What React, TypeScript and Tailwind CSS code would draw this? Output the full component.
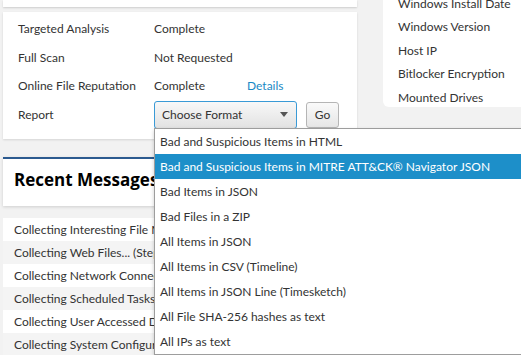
const statusRows = [
    { label: "Targeted Analysis", value: "Complete" },
    { label: "Full Scan", value: "Not Requested" },
    { label: "Online File Reputation", value: "Complete", link: "Details" },
];

const hostRows: string[] = [
    "Windows Install Date",
    "Windows Version",
    "Host IP",
    "Bitlocker Encryption",
    "Mounted Drives",
];

const messages: string[] = [
    "Collecting Interesting File Metadata...",
    "Collecting Web Files... (Step 2 of 3)",
    "Collecting Network Connections...",
    "Collecting Scheduled Tasks...",
    "Collecting User Accessed Data...",
    "Collecting System Configuration...",
];

const formats: string[] = [
    "Bad and Suspicious Items in HTML",
    "Bad and Suspicious Items in MITRE ATT&CK\u00ae Navigator JSON",
    "Bad Items in JSON",
    "Bad Files in a ZIP",
    "All Items in JSON",
    "All Items in CSV (Timeline)",
    "All Items in JSON Line (Timesketch)",
    "All File SHA-256 hashes as text",
    "All IPs as text",
];

const selectedFormat = 1;

function App() {
    return (
        <div className="relative w-[521px] h-[355px] overflow-hidden bg-[#f2f2f2] text-[12px] text-[#333] font-['Lato','Liberation_Sans',sans-serif]">
            <div className="flex flex-row gap-[26px] pl-[3px]">
                {/* left column */}
                <div className="w-[354px] shrink-0 flex flex-col">
                    <div className="h-[7px] bg-white shadow-[0_1px_2px_rgba(0,0,0,0.15)]"></div>

                    <div className="mt-[5px] h-[127px] bg-white shadow-[0_1px_2px_rgba(0,0,0,0.12)] pl-[15px] pt-[3px]">
                        {statusRows.map((row) => (
                            <div key={row.label} className="h-[28.5px] flex items-center">
                                <span className="w-[136px]">{row.label}</span>
                                <span className="w-[93px]">{row.value}</span>
                                {row.link && <span className="text-[#1a8ac5]">{row.link}</span>}
                            </div>
                        ))}
                        <div className="h-[28.5px] flex items-center">
                            <span className="w-[136px]">Report</span>
                            <div className="w-[143px] h-[28px] rounded-[3px] border border-[#3a9ad6] bg-gradient-to-b from-[#f8f8f8] to-[#e2e2e2] flex items-center justify-between pl-[7px] pr-[8px]">
                                <span>Choose Format</span>
                                <svg width="8" height="5" viewBox="0 0 8 5">
                                    <path d="M0 0 L8 0 L4 5 Z" fill="#555" />
                                </svg>
                            </div>
                            <div className="ml-[9px] w-[33px] h-[26px] rounded-[3px] border border-[#b5b5b5] bg-gradient-to-b from-[#fafafa] to-[#e6e6e6] flex items-center justify-center">
                                Go
                            </div>
                        </div>
                    </div>

                    <div className="mt-[18px] h-[49px] bg-white border-t-[2px] border-[#2c5a8f] shadow-[0_1px_3px_rgba(0,0,0,0.15)] flex items-center pl-[11px] pb-[5px]">
                        <h2 className="text-[17px] font-bold text-black whitespace-nowrap font-['Open_Sans','Liberation_Sans',sans-serif]">Recent Messages</h2>
                    </div>

                    <div className="mt-[12px] bg-white">
                        {messages.map((msg, i) => (
                            <div key={msg} className={`h-[23px] flex items-center pl-[11px] whitespace-nowrap ${i % 2 === 1 ? "bg-[#f4f4f4]" : "bg-white"}`}>
                                {msg}
                            </div>
                        ))}
                    </div>
                </div>

                {/* right column */}
                <div className="w-[160px] shrink-0">
                    <div className="h-[107px] bg-white rounded-bl-[6px] overflow-hidden pl-[15px]">
                        <div className="-mt-[8px]">
                            {hostRows.map((row) => (
                                <div key={row} className="h-[23.5px] flex items-center whitespace-nowrap">
                                    {row}
                                </div>
                            ))}
                        </div>
                    </div>
                </div>
            </div>

            {/* open dropdown list */}
            <div className="absolute left-[154px] top-[128px] w-[380px] bg-white border border-[#9d9d9d] shadow-[0_2px_4px_rgba(0,0,0,0.2)]">
                {formats.map((f, i) => (
                    <div key={f} className={`h-[25px] flex items-center pl-[5px] whitespace-nowrap ${i === selectedFormat ? "bg-[#1d8fc9] text-white" : ""}`}>
                        {f}
                    </div>
                ))}
            </div>
        </div>
    )
}

export default App
